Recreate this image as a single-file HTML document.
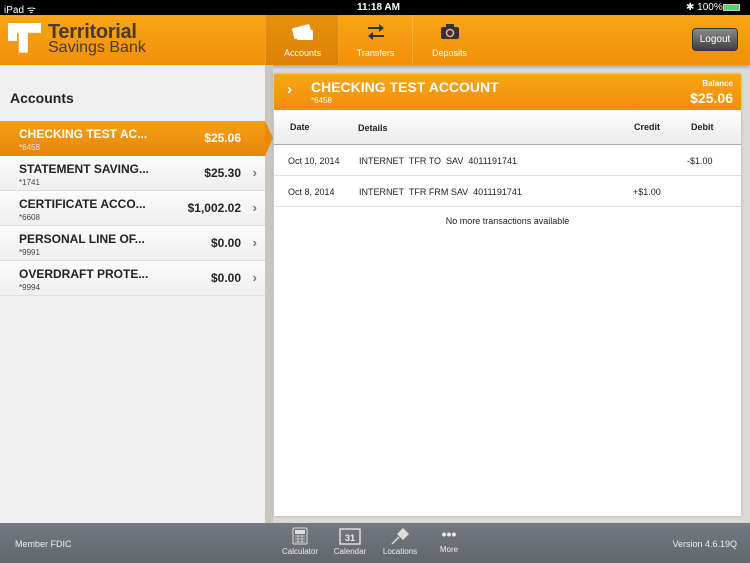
<!DOCTYPE html>
<html><head><style>
*{margin:0;padding:0;box-sizing:border-box}
body{width:750px;height:563px;overflow:hidden;font-family:"Liberation Sans",sans-serif;background:#dcd9d6;position:relative}
.a{position:absolute}
.status{left:0;top:0;width:750px;height:15px;background:#000;color:#fff;font-size:10px}
.hdr{left:0;top:15px;width:750px;height:50px;background:linear-gradient(#fba514,#f0900a);box-shadow:0 2px 3px rgba(0,0,0,.25)}
.tab{top:15px;height:50px;width:74px;color:#fff;font-size:9px;text-align:center;border-left:1px solid rgba(255,255,255,.2)}
.tab span{position:absolute;left:0;right:0;top:33px}
.left{left:0;top:65px;width:265px;height:458px;background:#efefef}
.row{left:0;width:265px;height:35px;background:linear-gradient(#fbfbfb,#f0f0f0);border-bottom:1px solid #dedede}
.row .n{position:absolute;left:19px;top:6px;font-size:12px;font-weight:bold;color:#222}
.row .s{position:absolute;left:19px;top:22px;font-size:8px;color:#444}
.row .v{position:absolute;right:24px;top:10px;font-size:12px;font-weight:bold;color:#222}
.row .c{position:absolute;right:8px;top:9px;font-size:13px;color:#777;font-weight:bold}
.card{left:274px;top:74px;width:467px;height:442px;background:#fff;box-shadow:0 0 3px rgba(0,0,0,.2)}
.tr{position:absolute;left:0;width:467px;height:31px;border-bottom:1px solid #ddd;font-size:9px;color:#222}
.tr span{position:absolute;top:11px}
.foot{left:0;top:523px;width:750px;height:40px;background:linear-gradient(#737980,#62676d);color:#eee;font-size:9px}
.fi{position:absolute;top:4px;width:50px;text-align:center;font-size:8px;color:#eee}
</style></head><body>
<div class="a status"><span class="a" style="left:4px;top:2px">iPad ᯤ</span><span class="a" style="left:357px;top:2px;font-weight:bold">11:18 AM</span><span class="a" style="left:686px;top:2px">✱ 100%</span><div class="a" style="left:723px;top:4px;width:17px;height:7px;background:#4cd964;border:1px solid #ccc"></div></div>
<div class="a hdr"></div>
<svg class="a" style="left:8px;top:23px" width="33" height="34"><path d="M0 0H37V11H22V33H12V11H0Z" fill="#fff" transform="scale(.9)"/><path d="M0 0H9V9H0Z" fill="#fff" transform="translate(0,9) scale(1)"/></svg>
<div class="a" style="left:48px;top:21px;font-size:20px;font-weight:bold;color:#4a3a2a;letter-spacing:-.3px">Territorial</div>
<div class="a" style="left:48px;top:39px;font-size:16px;color:#4a3a2a">Savings Bank</div>
<div class="a tab" style="left:265px;background:rgba(180,90,0,.28)"><svg class="a" style="left:25px;top:7px" width="24" height="20"><rect x="2" y="4" width="18" height="11" rx="1" fill="#fff" transform="rotate(-15 11 10)"/><rect x="6" y="8" width="16" height="10" rx="1" fill="#fff"/></svg><span>Accounts</span></div>
<div class="a tab" style="left:338px"><svg class="a" style="left:28px;top:8px" width="18" height="17"><path d="M1 4H12V1L17 5L12 9V6H1Z M17 12H6V9L1 13L6 17V14H17Z" fill="#333"/></svg><span>Transfers</span></div>
<div class="a tab" style="left:412px"><svg class="a" style="left:28px;top:9px" width="18" height="15"><rect x="0" y="3" width="18" height="12" rx="2" fill="#333"/><rect x="5" y="0" width="8" height="4" fill="#333"/><circle cx="9" cy="9" r="3.5" fill="none" stroke="#fa9" stroke-width="1.5"/></svg><span>Deposits</span></div>
<div class="a" style="left:692px;top:28px;width:46px;height:23px;border-radius:4px;background:linear-gradient(#8c8c8c,#3e3e3e);border:1px solid #333;color:#fff;font-size:10px;text-align:center;line-height:21px">Logout</div>
<div class="a left"></div>
<div class="a" style="left:265px;top:65px;width:8px;height:458px;background:#c9c5c1"></div>
<div class="a" style="left:10px;top:90px;font-size:14px;font-weight:bold;color:#222">Accounts</div>
<div class="a row" style="top:121px;width:265px;background:linear-gradient(#f7a014,#e5850a);border:none"><div class="n" style="color:#fff">CHECKING TEST AC...</div><div class="s" style="color:#fde">*6458</div><div class="v" style="color:#fff">$25.06</div></div>
<svg class="a" style="left:265px;top:121px" width="8" height="35"><path d="M0 0L8 17L0 35Z" fill="#eb8b0c"/></svg>
<div class="a row" style="top:156px"><div class="n">STATEMENT SAVING...</div><div class="s">*1741</div><div class="v">$25.30</div><div class="c">›</div></div>
<div class="a row" style="top:191px"><div class="n">CERTIFICATE ACCO...</div><div class="s">*6608</div><div class="v">$1,002.02</div><div class="c">›</div></div>
<div class="a row" style="top:226px"><div class="n">PERSONAL LINE OF...</div><div class="s">*9991</div><div class="v">$0.00</div><div class="c">›</div></div>
<div class="a row" style="top:261px"><div class="n">OVERDRAFT PROTE...</div><div class="s">*9994</div><div class="v">$0.00</div><div class="c">›</div></div>
<div class="a card">
<div class="a" style="left:0;top:0;width:467px;height:36px;background:linear-gradient(#fba514,#ef8e0a);color:#fff">
<div class="a" style="left:13px;top:7px;font-size:15px;font-weight:bold">›</div>
<div class="a" style="left:37px;top:5px;font-size:14px;font-weight:bold">CHECKING TEST ACCOUNT</div>
<div class="a" style="left:37px;top:22px;font-size:8px">*6458</div>
<div class="a" style="right:8px;top:5px;font-size:8px;font-weight:bold">Balance</div>
<div class="a" style="right:8px;top:16px;font-size:14px;font-weight:bold">$25.06</div></div>
<div class="tr" style="top:36px;height:35px;background:linear-gradient(#fff,#ebebeb);border-bottom:1px solid #aaa;font-weight:bold"><span style="left:16px;top:12px">Date</span><span style="left:84px;top:13px">Details</span><span style="left:360px;top:12px">Credit</span><span style="left:417px;top:12px">Debit</span></div>
<div class="tr" style="top:71px"><span style="left:14px">Oct 10, 2014</span><span style="left:85px">INTERNET&nbsp; TFR TO&nbsp; SAV&nbsp; 4011191741</span><span style="left:413px">-$1.00</span></div>
<div class="tr" style="top:102px"><span style="left:14px">Oct 8, 2014</span><span style="left:85px">INTERNET&nbsp; TFR FRM SAV&nbsp; 4011191741</span><span style="left:359px">+$1.00</span></div>
<div class="a" style="left:0;width:467px;top:142px;text-align:center;font-size:9px;color:#222">No more transactions available</div>
</div>
<div class="a foot">
<div class="a" style="left:15px;top:16px">Member FDIC</div>
<div class="a" style="right:13px;top:16px">Version 4.6.19Q</div>
<div class="fi" style="left:275px"><svg width="16" height="18"><rect x="1" y="1" width="14" height="16" rx="1" fill="none" stroke="#ddd"/><rect x="3" y="3" width="10" height="4" fill="#ddd"/><path d="M3 9h10M3 12h10M3 15h10M6 8v8M10 8v8" stroke="#ddd" stroke-width=".8"/></svg><br>Calculator</div>
<div class="fi" style="left:325px"><svg width="22" height="18"><rect x="1" y="2" width="20" height="15" fill="none" stroke="#eee" stroke-width="1.3"/><text x="11" y="14" font-size="9" font-weight="bold" fill="#eee" text-anchor="middle" font-family="Liberation Sans">31</text></svg><br>Calendar</div>
<div class="fi" style="left:375px"><svg width="20" height="18"><path d="M2 17L9 10" stroke="#ddd" stroke-width="1.5"/><path d="M7 7L13 1L19 7L13 13Z" fill="#ddd"/></svg><br>Locations</div>
<div class="fi" style="left:424px"><div style="height:18px;font-size:14px;line-height:14px;font-weight:bold">•••</div>More</div>
</div>
</body></html>
